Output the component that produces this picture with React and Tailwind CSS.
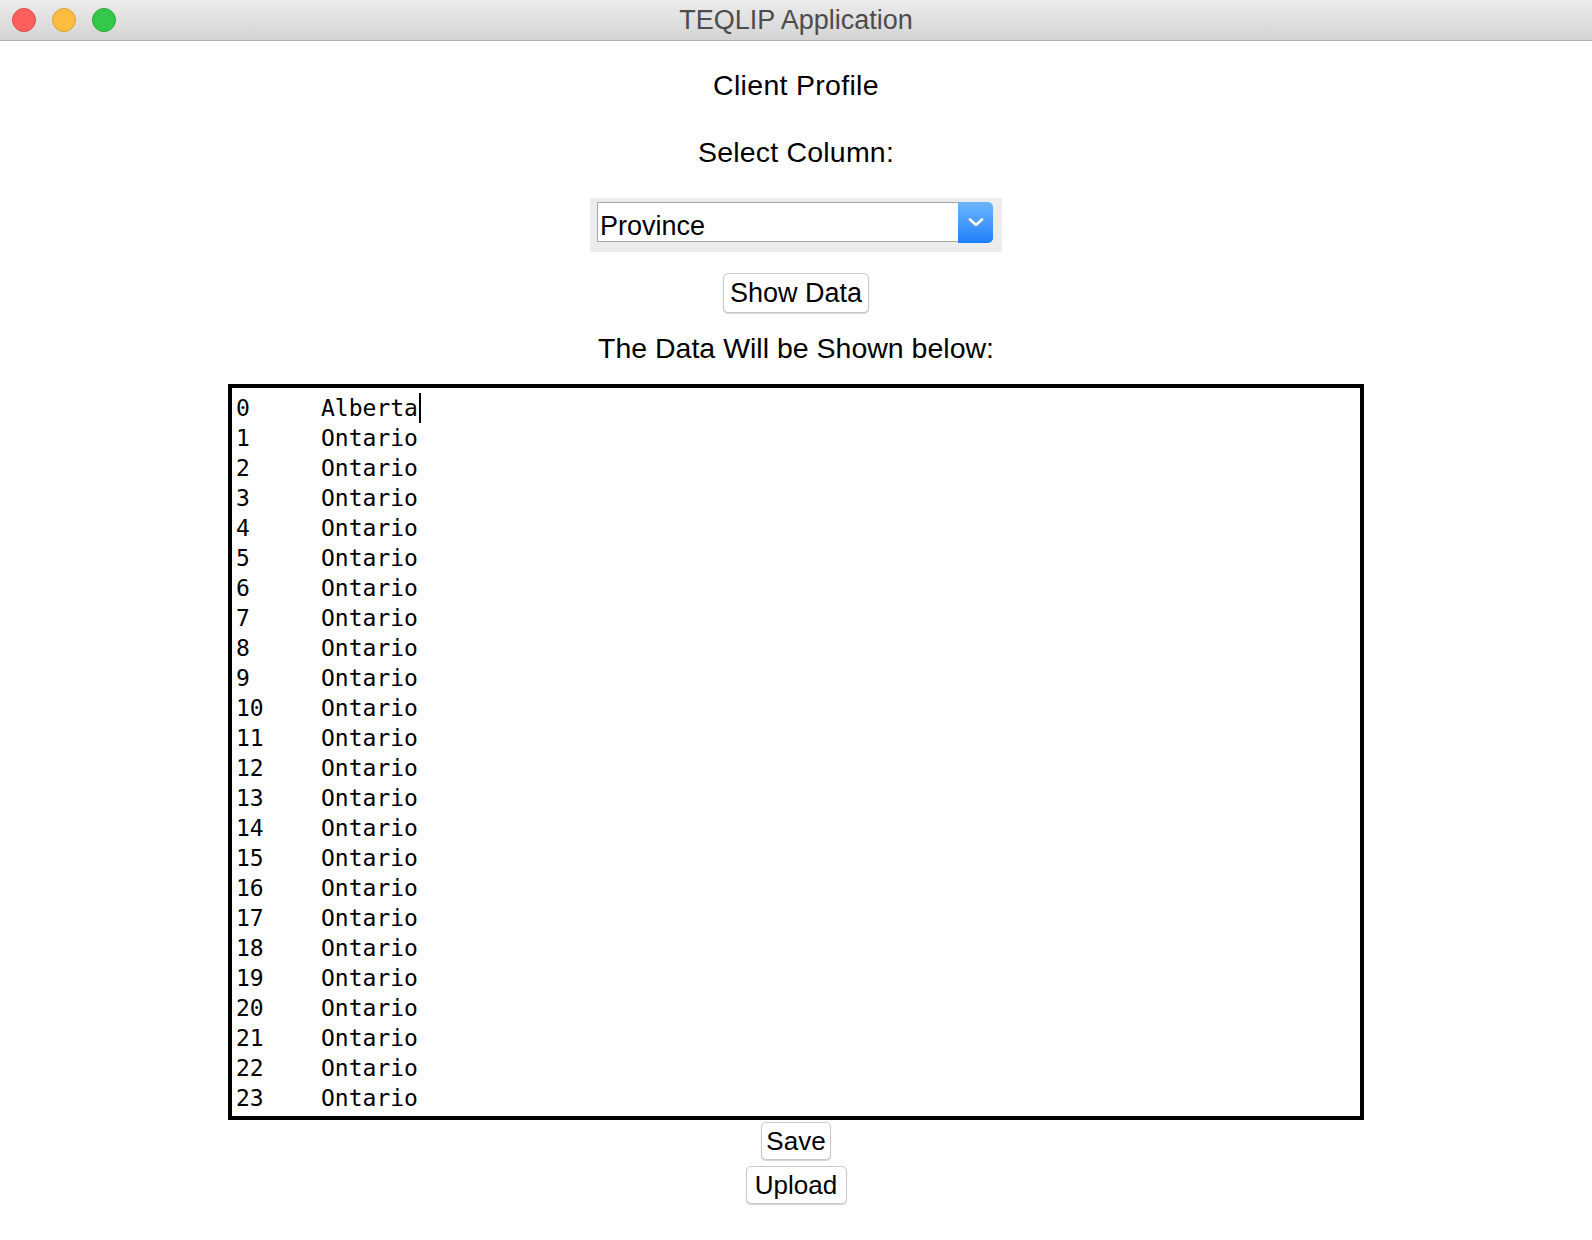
import React from 'react';

const sans = { fontFamily: '"Liberation Sans", Arial, sans-serif' };
const mono = { fontFamily: '"DejaVu Sans Mono", "Liberation Mono", monospace' };

const rows = Array.from({ length: 24 }, (_, i) => ({ id: i, value: i === 0 ? 'Alberta' : 'Ontario' }));

const TitleBar = () => (
  <div className="relative h-[41px] flex items-center justify-center bg-gradient-to-b from-[#ececec] to-[#d4d4d4] border-b border-[#b1b1b1]">
    <div className="absolute left-[12px] top-[8px] flex gap-[16px]">
      <span className="w-[24px] h-[24px] rounded-full bg-[#fc605c] border border-[#de4a46]"></span>
      <span className="w-[24px] h-[24px] rounded-full bg-[#fdbc40] border border-[#dea236]"></span>
      <span className="w-[24px] h-[24px] rounded-full bg-[#34c84a] border border-[#27aa35]"></span>
    </div>
    <span className="text-[27px] leading-[42px] text-[#4d4d4d]">TEQLIP Application</span>
  </div>
);

const Button = ({ label, className }) => (
  <button className={`bg-white border border-[#c8c8c8] rounded-[5px] shadow-[0_1px_1px_rgba(0,0,0,0.18)] text-black text-center ${className}`}>
    {label}
  </button>
);

const ColumnSelect = () => (
  <div className="w-[412px] h-[54px] bg-[#ececec] pt-[4px] pl-[7px] pr-[9px]">
    <div className="flex items-start">
      <div className="flex-1 h-[40px] bg-white border-y border-l border-[#a8a8a8] pl-[2px] text-[27px] leading-[46px] text-black overflow-hidden">
        Province
      </div>
      <div className="w-[35px] h-[41px] rounded-r-[5px] bg-gradient-to-b from-[#6db5fb] to-[#1a7ffb] flex items-center justify-center">
        <svg width="18" height="11" viewBox="0 0 18 11">
          <path d="M3 2.5 L9 8 L15 2.5" fill="none" stroke="white" strokeWidth="2.6" strokeLinecap="round" strokeLinejoin="round" />
        </svg>
      </div>
    </div>
  </div>
);

const DataBox = () => (
  <div className="w-[1136px] border-4 border-black pt-[5px] pb-[3px] pl-[4px] text-black" style={mono}>
    {rows.map((r) => (
      <div key={r.id} className="flex h-[30px] text-[23px] leading-[30px]">
        <span className="w-[85px]">{r.id}</span>
        <span>{r.value}</span>
        {r.id === 0 && <span className="inline-block w-[2px] h-[30px] bg-black ml-[1px]"></span>}
      </div>
    ))}
  </div>
);

export default function App() {
  return (
    <div className="min-h-screen bg-white" style={sans}>
      <TitleBar />
      <div className="flex flex-col items-center text-black">
        <p className="mt-[28px] text-[28.5px] leading-[32px] tracking-[0.3px]">Client Profile</p>
        <p className="mt-[35px] text-[28.5px] leading-[32px] tracking-[0.2px]">Select Column:</p>
        <div className="mt-[30px]">
          <ColumnSelect />
        </div>
        <Button label="Show Data" className="mt-[21px] w-[146px] h-[40px] text-[27px] leading-[38px]" />
        <p className="mt-[19px] text-[28.5px] leading-[32px]">The Data Will be Shown below:</p>
        <div className="mt-[20px]">
          <DataBox />
        </div>
        <Button label="Save" className="mt-[2px] w-[70px] h-[38px] text-[26px] leading-[36px]" />
        <Button label="Upload" className="mt-[6px] w-[101px] h-[38px] text-[26px] leading-[36px]" />
      </div>
    </div>
  );
}
